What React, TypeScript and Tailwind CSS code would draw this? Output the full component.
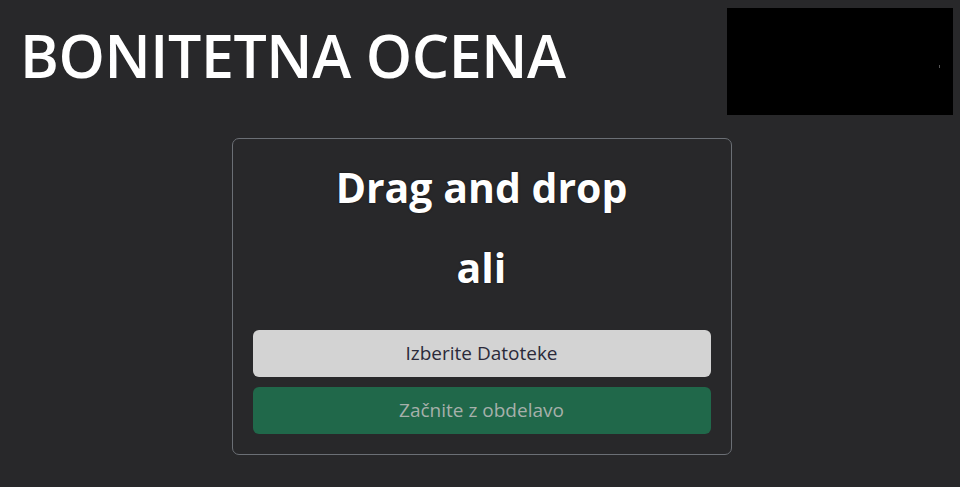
import React from "react";

const App = () => {
  return (
    <div className="min-h-screen w-full bg-[#28282a] font-['Open_Sans',sans-serif] text-white">
      {/* HEADER */}
      <header className="flex items-start justify-between pl-[20px] pr-[7px] pt-[8px]">
        <h1 className="mt-[11px] text-[59px] leading-[72px] font-semibold tracking-[-0.4px]">
          BONITETNA OCENA
        </h1>
        <div className="relative h-[107px] w-[226px] bg-black">
          <span className="absolute left-[212px] top-[57px] h-[3px] w-[1px] bg-[#555]" />
        </div>
      </header>

      {/* UPLOAD CARD */}
      <div className="flex justify-center pl-[3px]">
        <section className="mt-[23px] w-[500px] rounded-[7px] border border-[#6b6f75] px-[20px] pb-[20px] pt-[22px] text-center">
          <h2 className="text-[41px] leading-[52px] font-bold [text-shadow:0_0_2px_rgba(0,0,0,0.6)]">
            Drag and drop
          </h2>
          <p className="mt-[28px] text-[41px] leading-[52px] font-bold [text-shadow:0_0_2px_rgba(0,0,0,0.6)]">
            ali
          </p>

          <div className="mt-[37px] flex flex-col gap-[10px]">
            <button className="h-[47px] w-full rounded-[6px] bg-[#d3d3d3] text-[19px] text-[#2b2a3a]">
              Izberite Datoteke
            </button>
            <button className="h-[47px] w-full rounded-[6px] bg-[#20684a] text-[19px] text-[#a6b0aa]">
              Začnite z obdelavo
            </button>
          </div>
        </section>
      </div>
    </div>
  );
};

export default App;
